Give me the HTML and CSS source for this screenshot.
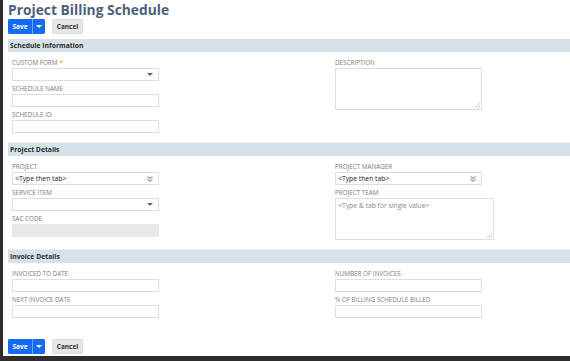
FILE: index.html
```html
<!DOCTYPE html>
<html lang="en">
  <head>
    <meta charset="UTF-8" />
    <title>Project Billing Schedule</title>
    <link rel="stylesheet" href="styles.css">
  </head>
  <body>
    <div class="page">
      <h1 class="title">Project Billing Schedule</h1>

      <!-- top buttons -->
      <div class="btn-row">
        <div class="btn-save">
          <button class="save-main">Save</button>
          <button class="save-menu"><span class="caret"></span></button>
        </div>
        <button class="btn-cancel">Cancel</button>
      </div>

      <!-- Schedule Information -->
      <div class="section">
        <div class="section-head">Schedule Information</div>
        <div class="section-body">
          <div class="col">
            <div class="field">
              <label>Custom Form <span class="req">*</span></label>
              <div class="box select"><span class="caret dark"></span></div>
            </div>
            <div class="field">
              <label>Schedule Name</label>
              <input class="box" type="text" />
            </div>
            <div class="field">
              <label>Schedule ID</label>
              <input class="box" type="text" />
            </div>
          </div>
          <div class="col">
            <div class="field">
              <label>Description</label>
              <textarea class="box area"></textarea>
            </div>
          </div>
        </div>
      </div>

      <!-- Project Details -->
      <div class="section">
        <div class="section-head">Project Details</div>
        <div class="section-body">
          <div class="col">
            <div class="field">
              <label>Project</label>
              <div class="box select">
                <span class="val">&lt;Type then tab&gt;</span>
                <svg class="dbl" width="6" height="6" viewBox="0 0 6 6">
                  <path d="M0.5 0.5 L3 2.5 L5.5 0.5 M0.5 3.2 L3 5.2 L5.5 3.2" fill="none" stroke="#8fa2b8" stroke-width="1.2" />
                </svg>
              </div>
            </div>
            <div class="field">
              <label>Service Item</label>
              <div class="box select"><span class="caret dark"></span></div>
            </div>
            <div class="field">
              <label>SAC Code</label>
              <div class="box disabled"></div>
            </div>
          </div>
          <div class="col">
            <div class="field">
              <label>Project Manager</label>
              <div class="box select">
                <span class="val">&lt;Type then tab&gt;</span>
                <svg class="dbl" width="6" height="6" viewBox="0 0 6 6">
                  <path d="M0.5 0.5 L3 2.5 L5.5 0.5 M0.5 3.2 L3 5.2 L5.5 3.2" fill="none" stroke="#8fa2b8" stroke-width="1.2" />
                </svg>
              </div>
            </div>
            <div class="field">
              <label>Project Team</label>
              <textarea class="box area wide" placeholder="<Type & tab for single value>"></textarea>
            </div>
          </div>
        </div>
      </div>

      <!-- Invoice Details -->
      <div class="section last">
        <div class="section-head">Invoice Details</div>
        <div class="section-body">
          <div class="col">
            <div class="field">
              <label>Invoiced to Date</label>
              <input class="box" type="text" />
            </div>
            <div class="field">
              <label>Next Invoice Date</label>
              <input class="box" type="text" />
            </div>
          </div>
          <div class="col">
            <div class="field">
              <label>Number of Invoices</label>
              <input class="box" type="text" />
            </div>
            <div class="field">
              <label>% of Billing Schedule Billed</label>
              <input class="box" type="text" />
            </div>
          </div>
        </div>
      </div>

      <!-- bottom buttons -->
      <div class="btn-row bottom">
        <div class="btn-save">
          <button class="save-main">Save</button>
          <button class="save-menu"><span class="caret"></span></button>
        </div>
        <button class="btn-cancel">Cancel</button>
      </div>
    </div>
  </body>
</html>
```

FILE: styles.css
```css
html,
body {
  margin: 0;
  height: 100%;
}
body {
  background: #2e2e2e;
  font-family: "Open Sans", arial, sans-serif;
  color: #333;
}
.page {
  margin-left: 3px;
  height: 356px;
  background: #fff;
  padding-left: 5px;
  box-sizing: border-box;
  overflow: hidden;
}
.title {
  margin: 0;
  padding-top: 1px;
  font-size: 13.8px;
  line-height: 17px;
  font-weight: 700;
  color: #4d5f7a;
}

/* buttons ------------------------------------------------------------ */
.btn-row {
  display: flex;
  gap: 7px;
  margin-top: 1px;
  height: 15px;
}
.btn-row.bottom {
  margin-top: 21px;
}
.btn-row button {
  font-family: inherit;
  font-size: 6.5px;
  font-weight: 700;
  border: 0;
  padding: 0;
  height: 15px;
  cursor: pointer;
}
.btn-save {
  display: flex;
  gap: 1px;
  background: #6ea4f7;
  border-radius: 2px;
  overflow: hidden;
}
.save-main {
  width: 24px;
  background: #116cf0;
  color: #fff;
}
.save-menu {
  width: 12px;
  background: #116cf0;
  display: flex;
  align-items: center;
  justify-content: center;
}
.caret {
  width: 0;
  height: 0;
  border-left: 3px solid transparent;
  border-right: 3px solid transparent;
  border-top: 3px solid #fff;
}
.caret.dark {
  border-top-color: #4f6a8c;
  border-left-width: 3.5px;
  border-right-width: 3.5px;
}
.btn-cancel {
  width: 31px;
  background: #e6e6e6;
  color: #333;
  border-radius: 2px;
  box-shadow: inset 0 0 0 1px #dcdcdc;
}

/* sections ----------------------------------------------------------- */
.section {
  margin-top: 5px;
}
.section + .section {
  margin-top: 0;
}
.section-head {
  height: 13px;
  line-height: 13px;
  background: #d6e2e8;
  font-size: 6.8px;
  font-weight: 700;
  color: #2b2b2b;
  padding-left: 2px;
}
.section-body {
  display: grid;
  grid-template-columns: 323px 1fr;
  padding: 6px 0 9px 4px;
  border-bottom: 1px solid #ececec;
}
.section.last .section-body {
  border-bottom: 0;
  padding-bottom: 0;
}
.col {
  display: flex;
  flex-direction: column;
  gap: 3px;
}
.field {
  display: flex;
  flex-direction: column;
}
.field label {
  height: 10px;
  line-height: 10px;
  font-size: 6.3px;
  text-transform: uppercase;
  color: #7a7a7a;
}
.req {
  color: #e39a2c;
  font-size: 8px;
  line-height: 8px;
}
.box {
  box-sizing: border-box;
  width: 147px;
  height: 13px;
  border: 1px solid #dedede;
  background: #fff;
  margin: 0;
  padding: 0 2px;
  font-family: inherit;
  font-size: 6.8px;
  color: #222;
  outline: none;
}
.select {
  display: flex;
  align-items: center;
  justify-content: flex-end;
  padding-right: 5px;
}
.select .val {
  flex: 1;
}
.dbl {
  display: block;
}
.disabled {
  background: #e8e8e8;
  border-color: #e8e8e8;
}
.area {
  height: 42px;
  resize: both;
  padding-top: 2px;
}
.area.wide {
  width: 159px;
}
.area::placeholder {
  color: #888;
}
.area::-webkit-resizer {
  background: linear-gradient(
      135deg,
      transparent 45%,
      #c4c4c4 45%,
      #c4c4c4 58%,
      transparent 58%,
      transparent 72%,
      #c4c4c4 72%,
      #c4c4c4 85%,
      transparent 85%
    )
    right 1px bottom 1px / 5px 5px no-repeat;
}
```
